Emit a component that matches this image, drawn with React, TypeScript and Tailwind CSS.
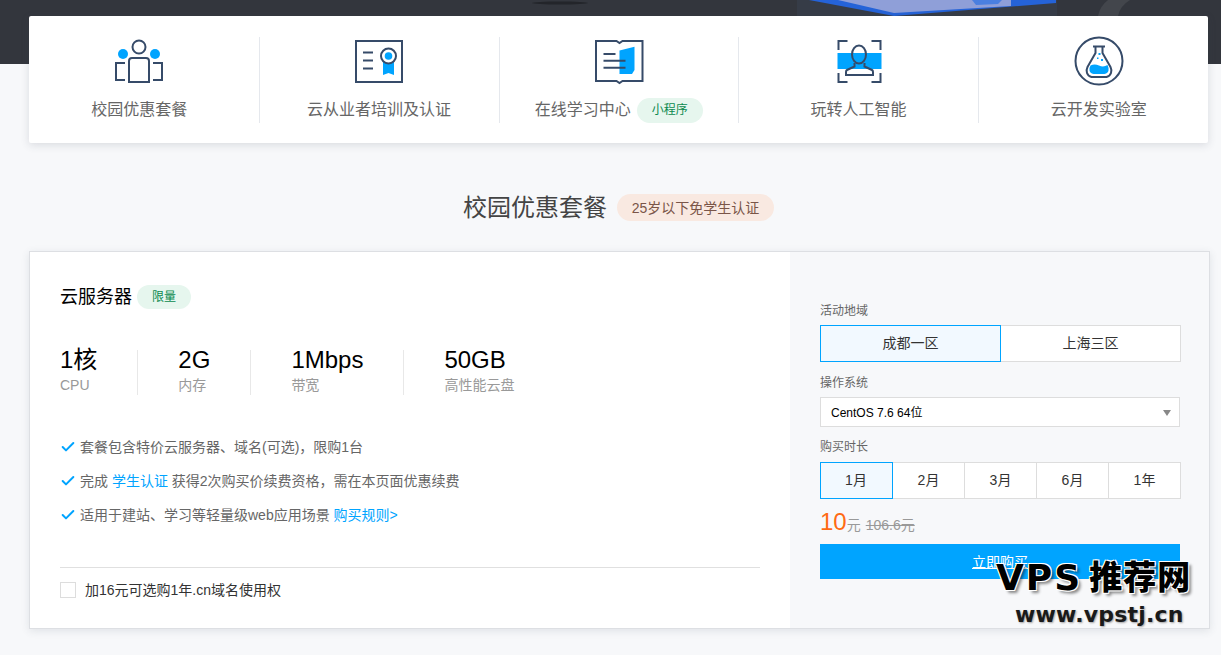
import { Check } from 'lucide-react';

const NAVY = '#364b69';
const BLUE = '#00a4ff';

function PeopleIcon() {
  return (
    <svg viewBox="0 7 80 53" className="h-[53px] w-20 overflow-visible" fill="none" stroke={NAVY} strokeWidth="2">
      <circle cx="24" cy="24" r="5" fill={BLUE} stroke="none" />
      <circle cx="56" cy="24" r="5" fill={BLUE} stroke="none" />
      <circle cx="40" cy="17" r="6.5" />
      <path d="M30 52V31a3 3 0 0 1 3-3h14a3 3 0 0 1 3 3v21z" />
      <path d="M26 33h-9v17h9M54 33h9v17h-9" />
    </svg>
  );
}

function CertIcon() {
  return (
    <svg viewBox="0 7 80 53" className="h-[53px] w-20 overflow-visible" fill="none" stroke={NAVY} strokeWidth="2">
      <rect x="17" y="11" width="46" height="41" />
      <path d="M24 22.500h10M24 30.500h10M24 38.500h10" />
      <path d="M44 31h11v14l-5.500-2-5.500 2z" fill={BLUE} stroke="none" />
      <circle cx="49.500" cy="26" r="7.500" fill="#fff" />
      <circle cx="49.500" cy="26" r="3.800" fill={BLUE} stroke="none" />
    </svg>
  );
}

function BookIcon() {
  return (
    <svg viewBox="-0.500 7 80 53" className="h-[53px] w-20 overflow-visible" fill="none" stroke={NAVY} strokeWidth="2">
      <path d="M40 20.500 55 16.700V40l-2.500 4H40z" fill={BLUE} stroke="none" />
      <path d="M16.500 11H37l3 2 3-2h20v40H43l-3 2-3-2H16.500z" />
      <path d="M24 24h12M24 30.700h22M24 37.700h22" />
    </svg>
  );
}

function FaceIcon() {
  return (
    <svg viewBox="-0.500 7 80 53" className="h-[53px] w-20 overflow-visible" fill="none" stroke={NAVY} strokeWidth="2">
      <rect x="18" y="23" width="44" height="16" fill={BLUE} stroke="none" />
      <path d="M28 11h-9v9M52 11h9v9M19 43v9h9M61 43v9h-9" />
      <ellipse cx="39.500" cy="24.500" rx="7" ry="9" />
      <path d="M35 33v3.500l-7.500 3.500q-1 .5-1 2V45h27v-3q0-1.500-1-2L45 36.500V33" />
    </svg>
  );
}

function FlaskIcon() {
  return (
    <svg viewBox="-0.500 7 80 53" className="h-[53px] w-20 overflow-visible" fill="none" stroke={NAVY} strokeWidth="2">
      <circle cx="39.500" cy="31" r="23.500" />
      <path d="M31 35.500q4-2 8.500 0t8.500-.5q1.500 3 1 5.500t-4 3.500H34q-3.500-1-4-3.500t1-5z" fill={BLUE} stroke="none" />
      <path d="M33.500 16.500h12M36 16.500V23l-8 14q-1.500 3-.5 6t4.500 4h15q3.500-1 4.500-4t-.5-6l-8-14v-6.500" />
      <rect x="39" y="23" width="2" height="2" fill={BLUE} stroke="none" />
      <rect x="41.500" y="29" width="2" height="2" fill={BLUE} stroke="none" />
      <rect x="37.500" y="27.500" width="1.500" height="1.500" fill={BLUE} stroke="none" />
    </svg>
  );
}

function BannerArt() {
  return (
    <svg viewBox="0 0 1221 64" className="absolute inset-0 h-16 w-[1221px]">
      <ellipse cx="560" cy="3" rx="28" ry="1.500" fill="#23252a" />
      <path d="M797 0v16h260V0z" fill="#3a4152" opacity="0.5" />
      <path d="M809 0 894 16 1056 3V0z" fill="#2563d8" />
      <path d="M838 0 894 13 1011 6V0z" fill="#8f9fd8" />
      <path d="M972 0h30l-4 4-22 1z" fill="#4a7fe0" />
      <path d="M1098 16q2-10 10-16h22q-10 6-12 16z" fill="#43464c" />
    </svg>
  );
}

const items = [
  { label: '校园优惠套餐', icon: <PeopleIcon /> },
  { label: '云从业者培训及认证', icon: <CertIcon /> },
  { label: '在线学习中心', icon: <BookIcon />, tag: '小程序' },
  { label: '玩转人工智能', icon: <FaceIcon /> },
  { label: '云开发实验室', icon: <FlaskIcon /> },
];

const specs = [
  { value: '1核', name: 'CPU' },
  { value: '2G', name: '内存' },
  { value: '1Mbps', name: '带宽' },
  { value: '50GB', name: '高性能云盘' },
];

function Bullet({ children }: { children: React.ReactNode }) {
  return (
    <li className="flex h-5 items-center text-sm text-[#666]">
      <Check size={16} strokeWidth={3} color={BLUE} className="mr-1 shrink-0" aria-hidden="true" />
      {children}
    </li>
  );
}

export default function App() {
  return (
    <div className="relative h-[655px] overflow-hidden bg-[#f7f8fa] font-['Liberation_Sans','Noto_Sans_CJK_SC',sans-serif]">
      <div className="relative h-16 bg-[#33363d]">
        <BannerArt />
      </div>

      <div className="relative z-10 -mt-12 ml-[29px] w-[1179px] rounded-[2px] bg-white pt-[21px] pb-5 shadow-[0_2px_8px_rgba(60,70,90,0.16)]">
        <div className="-ml-[9px] flex">
          {items.map((item, i) => (
            <div
              key={item.label}
              className={`flex h-[86px] w-[239.75px] shrink-0 flex-col items-center ${i < 4 ? 'border-r border-[#e5e8ed]' : ''}`}
            >
              {item.icon}
              <div className="mt-2 flex h-6 items-center gap-[6px] text-base whitespace-nowrap text-[#666]">
                {item.label}
                {item.tag && (
                  <span className="flex h-[25px] w-[66px] items-center justify-center rounded-full bg-[#e6f6ee] text-xs text-[#0b8a4f]">
                    {item.tag}
                  </span>
                )}
              </div>
            </div>
          ))}
        </div>
      </div>

      <div className="mt-[51px] flex items-center justify-center gap-[10px] pl-4">
        <h2 className="text-2xl leading-[27px] text-[#444]">校园优惠套餐</h2>
        <span className="flex h-[27px] w-[157px] items-center justify-center rounded-full bg-[#f9e9e1] text-sm text-[#7a5548]">
          25岁以下免学生认证
        </span>
      </div>

      <div className="mt-[30px] ml-[29px] flex h-[378px] w-[1181px] border border-[#dddfe3] bg-white shadow-[0_2px_8px_rgba(60,70,90,0.12)]">
        <div className="w-[760px] shrink-0 px-[30px] pt-[33px]">
          <div className="flex h-6 items-center gap-[5px]">
            <span className="text-lg text-black">云服务器</span>
            <span className="flex h-6 w-[54px] items-center justify-center rounded-full bg-[#e6f6ee] text-xs text-[#0b8a4f]">
              限量
            </span>
          </div>

          <div className="mt-[41px] flex">
            {specs.map((s, i) => (
              <div key={s.name} className={i < 3 ? 'mr-10 h-[45px] border-r border-[#e8e8e8] pr-10' : 'h-[45px]'}>
                <div className="text-2xl leading-5 text-black">{s.value}</div>
                <div className="mt-[6px] text-sm leading-[18px] text-[#999]">{s.name}</div>
              </div>
            ))}
          </div>

          <ul className="mt-[42px] flex flex-col gap-[14px]">
            <Bullet>套餐包含特价云服务器、域名(可选)，限购1台</Bullet>
            <Bullet>
              <span>
                完成 <a className="text-[#00a4ff]">学生认证</a> 获得2次购买价续费资格，需在本页面优惠续费
              </span>
            </Bullet>
            <Bullet>
              <span>
                适用于建站、学习等轻量级web应用场景 <a className="text-[#00a4ff]">购买规则&gt;</a>
              </span>
            </Bullet>
          </ul>

          <div className="mt-[42px] border-t border-[#e0e0e0] pt-[14px]">
            <label className="flex h-4 items-center pb-px text-sm text-[#333]">
              <span className="mr-[9px] h-4 w-4 border border-[#ddd] bg-white" />
              加16元可选购1年.cn域名使用权
            </label>
          </div>
        </div>

        <div className="min-w-0 flex-1 bg-[#f7f8fa] px-[30px] pt-[50px]">
          <div className="h-4 text-xs leading-[18px] text-[#666]">活动地域</div>
          <div className="mt-[7px] flex h-[37px] w-[361px] text-sm text-[#333]">
            <div className="flex w-[181px] items-center justify-center border border-[#00a4ff] bg-[#f2f9ff] pb-px">成都一区</div>
            <div className="flex w-[180px] items-center justify-center border border-l-0 border-[#ddd] bg-white pb-px">上海三区</div>
          </div>

          <div className="mt-3 h-4 text-xs leading-[18px] text-[#666]">操作系统</div>
          <div className="mt-[7px] flex h-[30px] w-[360px] items-center justify-between border border-[#ddd] bg-white pt-px pr-2 pl-[10px] text-xs text-black">
            CentOS 7.6 64位
            <span className="h-0 w-0 border-x-[4.5px] border-t-[6px] border-x-transparent border-t-[#888]" />
          </div>

          <div className="mt-[11px] h-4 text-xs leading-[18px] text-[#666]">购买时长</div>
          <div className="mt-2 flex h-[37px] w-[361px] text-sm text-[#333]">
            <div className="flex w-[73px] items-center justify-center border border-[#00a4ff] bg-[#f2f9ff] pb-px pr-px">1月</div>
            {['2月', '3月', '6月', '1年'].map((m) => (
              <div key={m} className="flex w-[72px] items-center justify-center border border-l-0 border-[#ddd] bg-white pb-px">
                {m}
              </div>
            ))}
          </div>

          <div className="mt-[10px] flex h-[26px] items-baseline">
            <span className="text-2xl leading-[26px] text-[#ff6a13]">10</span>
            <span className="text-sm text-[#999]">元</span>
            <span className="ml-[5px] text-sm text-[#999] line-through">106.6元</span>
          </div>

          <button className="mt-[9px] flex h-[35px] w-[360px] items-center justify-center bg-[#00a4ff] text-sm text-white underline">
            立即购买
          </button>
        </div>
      </div>

      {/* watermark over the corner */}
      <div className="absolute top-[558px] left-[996px] z-20 w-[206px] text-black">
        <div className="flex h-10 items-center gap-[7px] font-bold whitespace-nowrap [text-shadow:1px_1px_0_#fff,-1px_-1px_0_#fff,1px_-1px_0_#fff,-1px_1px_0_#fff,3px_3px_3px_rgba(0,0,0,0.45)]">
          <span className="font-['DejaVu_Sans'] text-[36px] leading-10 tracking-[2px]">VPS</span>
          <span className="text-[33px] leading-10 font-black tracking-[1px]">推荐网</span>
        </div>
        <div className="mt-1 ml-[19px] font-['DejaVu_Sans'] text-[22px] leading-[26px] font-bold tracking-[0.2px] whitespace-nowrap text-[#1a1a1a] [text-shadow:1px_1px_2px_rgba(0,0,0,0.35)]">
          www.vpstj.cn
        </div>
      </div>
    </div>
  );
}
